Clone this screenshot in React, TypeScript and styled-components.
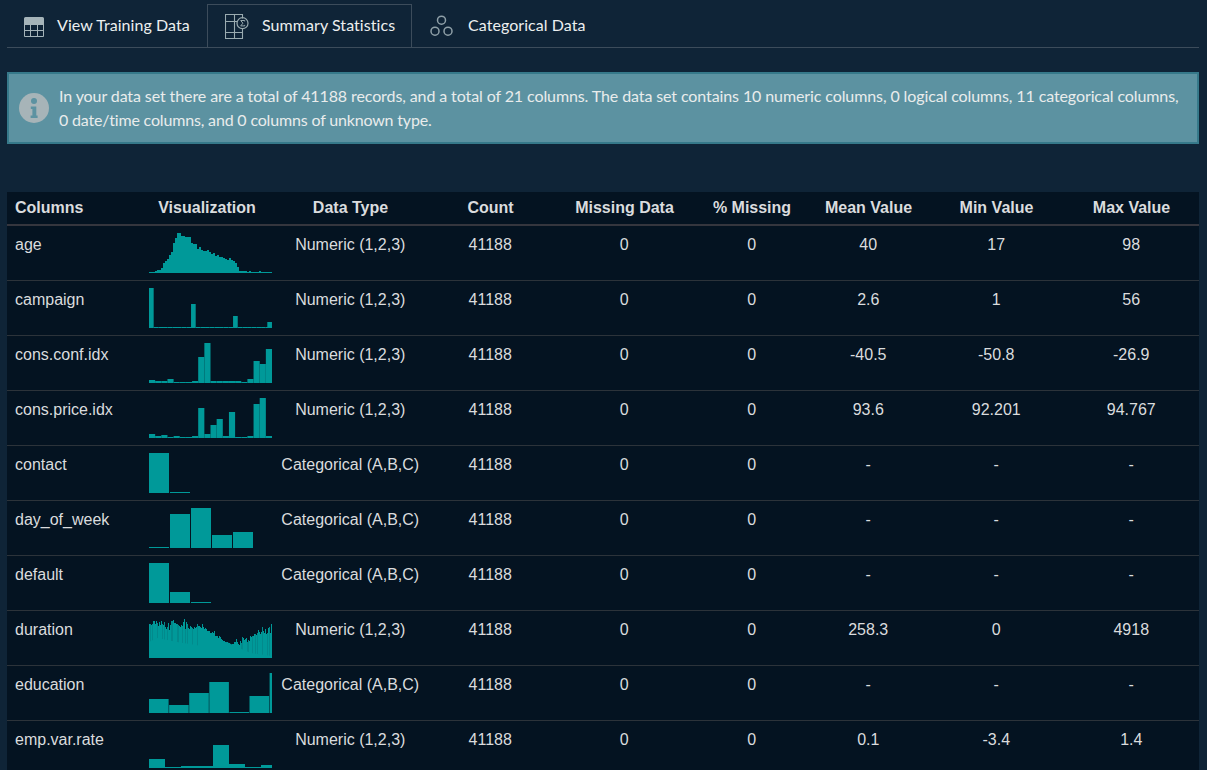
import React from 'react';
import styled, { createGlobalStyle } from 'styled-components';

const Global = createGlobalStyle`
  html, body { margin: 0; background: #0f2437; }
  * { box-sizing: border-box; }
`;

const Page = styled.main`
  height: 100vh;
  overflow: hidden;
  padding: 4px 8px 0 7px;
  color: #dadcde;
  font-family: Lato, sans-serif;
  font-size: 16px;
`;

const TabBar = styled.nav`
  display: flex;
  height: 44px;
  border-bottom: 1px solid #3c4c5b;
`;

const Tab = styled.div<{ $active?: boolean; $width: number; $pad: number; $gap: number }>`
  display: flex;
  align-items: center;
  width: ${(p) => p.$width}px;
  height: 44px;
  padding-left: ${(p) => p.$pad}px;
  gap: ${(p) => p.$gap}px;
  border: 1px solid ${(p) => (p.$active ? '#3c4c5b' : 'transparent')};
  border-bottom: 1px solid #3c4c5b;
  color: #ecefef;
  letter-spacing: 0.06px;
  white-space: nowrap;
  svg { flex: none; }
`;

const TabLabel = styled.span`
  padding-bottom: 3px;
`;

const Notice = styled.section`
  display: flex;
  align-items: center;
  height: 72px;
  margin-top: 24px;
  padding-left: 10px;
  gap: 10px;
  background: #5c92a1;
  border: 2px solid #36798a;
  svg { flex: none; }
`;

const NoticeText = styled.div`
  line-height: 24px;
  color: #e9ecec;
  white-space: nowrap;
`;

const NoticeLine = styled.p<{ $tracking: number }>`
  margin: 0;
  letter-spacing: ${(p) => p.$tracking}px;
`;

const Table = styled.table`
  width: 1192px;
  margin-top: 48px;
  table-layout: fixed;
  border-collapse: separate;
  border-spacing: 0;
  background: #041321;
  font-family: "Liberation Sans", Arial, sans-serif;
  font-size: 16px;
  line-height: 20px;
`;

const HeadCell = styled.th<{ $left?: boolean }>`
  height: 34px;
  padding: ${(p) => (p.$left ? '6px 8px' : '6px 0 6px 1px')};
  text-align: ${(p) => (p.$left ? 'left' : 'center')};
  vertical-align: top;
  border-bottom: 2px solid #35363e;
  white-space: nowrap;
`;

const Cell = styled.td<{ $left?: boolean }>`
  height: 55px;
  padding: 9px 0 0 ${(p) => (p.$left ? 8 : 0.5)}px;
  text-align: ${(p) => (p.$left ? 'left' : 'center')};
  vertical-align: top;
  border-bottom: 1px solid #2c333a;
  white-space: nowrap;
`;

const ChartCell = styled(Cell)`
  padding-top: 7px;
`;

const Spark = styled.svg`
  display: block;
  overflow: visible;
`;

type Bars = { pitch: number; width: number; values: number[]; lastX?: number; shaded?: boolean };

const ones = (n: number) => Array<number>(n).fill(1);

const charts: Record<string, Bars> = {
  age: {
    pitch: 2, width: 2,
    values: [1, 1, 1, 2, 3, 3, 5, 10, 12, 14, 18, 21, 30, 35, 40, 40, 37, 37, 36, 36, 36, 30, 29, 29, 24, 26, 23, 22, 22, 23, 21, 19, 20, 17, 18, 16, 16, 15, 14, 13, 15, 13, 12, 10, 6, 2, 2, 2, 2, 1, 2, 1, 1, 1, 1, 2, 1, 1, 1, 1, 1, 1],
  },
  campaign: {
    pitch: 4.67, width: 4.67, lastX: 118.3,
    values: [40, ...ones(8), 24, ...ones(8), 12, ...ones(7), 6],
  },
  'cons.conf.idx': {
    pitch: 6.15, width: 6.15,
    values: [3, 2, 2, 4, 1, 1, 1, 2, 26, 40, 2, 2, 2, 2, 2, 1, 4, 22, 19, 34],
  },
  'cons.price.idx': {
    pitch: 6.15, width: 6.15,
    values: [4, 2, 3, 1, 2, 1, 1, 2, 30, 4, 13, 19, 2, 26, 1, 1, 2, 34, 40, 2],
  },
  contact: { pitch: 21, width: 20, values: [40, 1] },
  day_of_week: { pitch: 21, width: 20, values: [1, 34, 40, 13, 16] },
  default: { pitch: 21, width: 20, values: [40, 11, 1] },
  duration: {
    pitch: 1, width: 1, shaded: true,
    values: [34, 34, 33, 34, 37, 37, 34, 37, 35, 32, 36, 33, 37, 34, 33, 36, 31, 29, 31, 35, 28, 33, 37, 37, 38, 35, 35, 34, 34, 33, 32, 31, 33, 32, 36, 39, 29, 36, 34, 30, 29, 32, 31, 30, 29, 31, 30, 31, 34, 32, 32, 31, 30, 34, 31, 29, 30, 29, 27, 27, 27, 25, 25, 26, 25, 27, 22, 22, 22, 20, 22, 21, 19, 18, 17, 17, 16, 15, 16, 15, 15, 14, 13, 14, 14, 16, 16, 19, 16, 14, 13, 17, 15, 21, 20, 18, 19, 20, 16, 18, 17, 22, 21, 22, 22, 24, 24, 23, 25, 28, 26, 24, 26, 31, 27, 25, 29, 24, 25, 30, 31, 25, 34],
  },
  education: { pitch: 20.1, width: 19.6, values: [14, 8, 20, 31, 1, 17, 40] },
  'emp.var.rate': { pitch: 16, width: 16, values: [9, 1, 2, 2, 23, 4, 1, 3] },
};

function Chart({ name }: { name: string }) {
  const { pitch, width, values, lastX, shaded } = charts[name];
  return (
    <Spark width="123" height="40" viewBox="0 0 123 40">
      {values.map((v, i) => {
        const x = lastX !== undefined && i === values.length - 1 ? lastX : i * pitch;
        const dim = shaded && (i < 50 || i > 88) && (i % 7 === 1 || i % 5 === 3);
        const w = Math.max(0, Math.min(width, 123 - x));
        return <rect key={i} x={x} y={40 - v} width={w} height={v} fill={dim ? '#028a8c' : '#009999'} />;
      })}
      {shaded && <path d="M0 40V24l8-4 20 4 25 4 25-4 10 5 14 6 21 3v2z" fill="#009999" />}
    </Spark>
  );
}

const columns: [string, number][] = [
  ['Columns', 134], ['Visualization', 131], ['Data Type', 156], ['Count', 124], ['Missing Data', 144],
  ['% Missing', 111], ['Mean Value', 122], ['Min Value', 134], ['Max Value', 136],
];

const NUM = 'Numeric (1,2,3)';
const CAT = 'Categorical (A,B,C)';

const rows: [string, string, string, string, string][] = [
  ['age', NUM, '40', '17', '98'],
  ['campaign', NUM, '2.6', '1', '56'],
  ['cons.conf.idx', NUM, '-40.5', '-50.8', '-26.9'],
  ['cons.price.idx', NUM, '93.6', '92.201', '94.767'],
  ['contact', CAT, '-', '-', '-'],
  ['day_of_week', CAT, '-', '-', '-'],
  ['default', CAT, '-', '-', '-'],
  ['duration', NUM, '258.3', '0', '4918'],
  ['education', CAT, '-', '-', '-'],
  ['emp.var.rate', NUM, '0.1', '-3.4', '1.4'],
];

const TableIcon = () => (
  <svg width="20" height="22" viewBox="0 -2 20 22" fill="none" stroke="#a5b4b9">
    <path d="M0 8V1.5A1.5 1.5 0 0 1 1.5 0h17A1.5 1.5 0 0 1 20 1.5V8z" fill="#a5b4b9" stroke="none" />
    <path d="M.5 7v12.5h19V7M6.5 7v12.5M13.5 7v12.5M.5 13.5h19" />
  </svg>
);

const SummaryIcon = () => (
  <svg width="24" height="26" viewBox="0 -1 24 26" fill="none" stroke="#9aabb0">
    <path d="M17.5 4.5V.5H.5v24h17V14.5M.5 7.5h12M.5 18.5h17M9.5.5v24" strokeWidth="1.1" />
    <circle cx="17.5" cy="9.2" r="5.5" strokeWidth="1.2" />
    <path d="M19.7 7.5v-1h-4l2.2 2.7-2.2 2.7h4v-1" />
  </svg>
);

const CirclesIcon = () => (
  <svg width="24" height="22" viewBox="0 0 24 22" fill="none" stroke="#8fa0a8" strokeWidth="1.5">
    <circle cx="11.5" cy="5.2" r="4" />
    <circle cx="5" cy="16.2" r="4" />
    <circle cx="18" cy="16.2" r="4" />
  </svg>
);

const InfoIcon = () => (
  <svg width="30" height="30" viewBox="0 0 30 30">
    <circle cx="15" cy="15" r="15" fill="#a7b4b8" />
    <circle cx="15" cy="8" r="3" fill="#5c92a1" />
    <path d="M11.8 13.5H17.3v9h1.3V25h-7v-2.5h1.8v-6.6h-1.6z" fill="#5c92a1" />
  </svg>
);

export default function App() {
  return (
    <Page>
      <Global />
      <TabBar>
        <Tab $width={200} $pad={16} $gap={13}><TableIcon /><TabLabel>View Training Data</TabLabel></Tab>
        <Tab $active $width={205} $pad={17} $gap={13}><SummaryIcon /><TabLabel>Summary Statistics</TabLabel></Tab>
        <Tab $width={200} $pad={17} $gap={14}><CirclesIcon /><TabLabel>Categorical Data</TabLabel></Tab>
      </TabBar>
      <Notice>
        <InfoIcon />
        <NoticeText>
          <NoticeLine $tracking={-0.102}>
            In your data set there are a total of 41188 records, and a total of 21 columns. The data set contains 10 numeric columns, 0 logical columns, 11 categorical columns,
          </NoticeLine>
          <NoticeLine $tracking={-0.17}>0 date/time columns, and 0 columns of unknown type.</NoticeLine>
        </NoticeText>
      </Notice>
      <Table>
        <colgroup>{columns.map(([n, w]) => <col key={n} width={w} />)}</colgroup>
        <thead>
          <tr>{columns.map(([n], i) => <HeadCell key={n} $left={i === 0}>{n}</HeadCell>)}</tr>
        </thead>
        <tbody>
          {rows.map(([name, type, mean, min, max]) => (
            <tr key={name}>
              <Cell $left>{name}</Cell>
              <ChartCell $left><Chart name={name} /></ChartCell>
              <Cell>{type}</Cell>
              <Cell>41188</Cell>
              <Cell>0</Cell>
              <Cell>0</Cell>
              <Cell>{mean}</Cell>
              <Cell>{min}</Cell>
              <Cell>{max}</Cell>
            </tr>
          ))}
        </tbody>
      </Table>
    </Page>
  );
}
